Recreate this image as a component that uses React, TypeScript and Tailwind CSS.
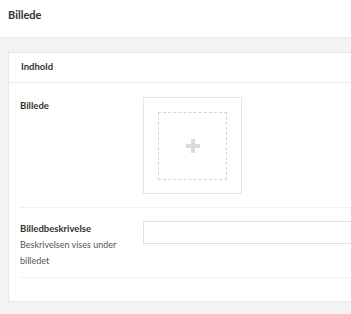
const font = { fontFamily: "Lato, 'Open Sans', sans-serif" };

export default function App() {
  return (
    <div className="w-[351px] h-[314px] overflow-hidden bg-[#f4f3f3] text-[#333]" style={font}>
      {/* Page title */}
      <div className="h-[38px] bg-white border-b border-[#ebebeb] px-2 pt-[8px]">
        <h1 className="text-[11px] leading-[14px] font-bold">Billede</h1>
      </div>

      <div className="pl-2 pt-[14px]">
        <div className="w-[360px] h-[250px] bg-white border border-[#e8e8e8]">
          {/* Card header */}
          <div className="h-[30px] border-b border-[#ececec] px-[12px] flex items-center">
            <h2 className="text-[9.5px] font-bold">Indhold</h2>
          </div>

          {/* Image row */}
          <div className="mx-[11px] border-b border-[#f0f0f0] flex pt-[14px] pb-[13px]">
            <div className="w-[123px] text-[9.5px] font-bold leading-[14px] pt-[2px]">Billede</div>
            <div className="w-[99px] h-[97px] border border-[#e6e6e6] flex items-center justify-center">
              <div className="w-[69px] h-[68px] border border-dashed border-[#d6d6d6] flex items-center justify-center">
                <svg width="14" height="14" viewBox="0 0 14 14">
                  <rect x="5" y="0" width="4" height="14" fill="#dcdcdc" />
                  <rect x="0" y="5" width="14" height="4" fill="#dcdcdc" />
                </svg>
              </div>
            </div>
          </div>

          {/* Description row */}
          <div className="mx-[11px] border-b border-[#f0f0f0] flex pt-[13px] pb-[8px]">
            <div className="w-[123px] pt-[1px]">
              <div className="text-[9.5px] font-bold leading-[14px]">Billedbeskrivelse</div>
              <div className="text-[9px] leading-[16px] text-[#555] mt-[1px] w-[100px]">
                Beskrivelsen vises under billedet
              </div>
            </div>
            <div className="flex-1 h-[23px] border border-[#e0e0e0] bg-white" />
          </div>
        </div>
      </div>
    </div>
  );
}
